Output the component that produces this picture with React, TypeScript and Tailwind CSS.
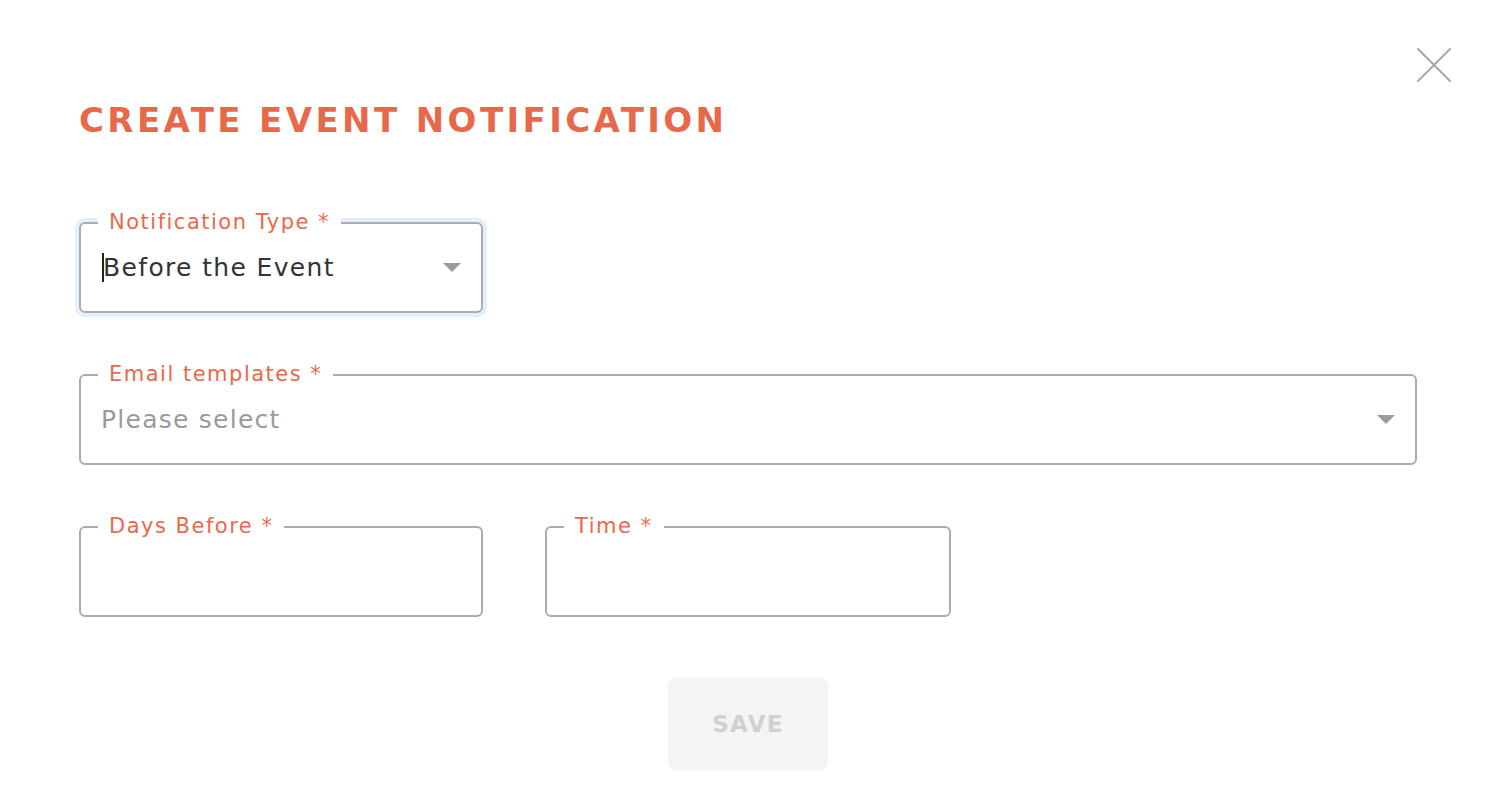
import React from "react";

const font = { fontFamily: '"DejaVu Sans", "Open Sans", sans-serif' };

function Arrow() {
  return (
    <svg width="18" height="9" viewBox="0 0 18 9" className="shrink-0">
      <path d="M0 0 L18 0 L9 9 Z" fill="#9b9b9b" />
    </svg>
  );
}

function Label({ children }: { children: React.ReactNode }) {
  return (
    <span className="absolute -top-[16px] left-[17px] bg-white px-[11px] text-[21px] leading-[28px] tracking-[1.5px] text-[#e8694a]">
      {children}
    </span>
  );
}

export default function App() {
  return (
    <div className="min-h-[794px] w-full bg-white font-['DejaVu_Sans',sans-serif]" style={font}>
      <div className="flex justify-end pt-[48px] pr-[43px]">
        <svg width="34" height="34" viewBox="0 0 34 34">
          <path d="M1 1 L33 33 M33 1 L1 33" stroke="#a5a8a4" strokeWidth="2" strokeLinecap="round" />
        </svg>
      </div>
      <div className="pl-[79px] pr-[77px]">
        <h1 className="mt-[16px] text-[34px] leading-[44px] font-bold tracking-[3.4px] text-[#e8694a]">
          CREATE EVENT NOTIFICATION
        </h1>
        <div className="mt-[80px] flex flex-col gap-[61px]">
          <div className="relative flex h-[91px] w-[404px] items-center justify-between rounded-[6px] border-2 border-[#a9adad] pl-[21px] pr-[20px] shadow-[0_0_0_4px_#e5eefb]">
            <Label>Notification Type *</Label>
            <div className="flex items-center">
              <span className="mr-[-1px] h-[29px] w-[2px] bg-[#222]" />
              <span className="text-[25px] tracking-[1.35px] text-[#333]">Before the Event</span>
            </div>
            <Arrow />
          </div>
          <div className="relative flex h-[91px] w-full items-center justify-between rounded-[6px] border-2 border-[#a9adad] pl-[20px] pr-[20px]">
            <Label>Email templates *</Label>
            <span className="text-[25px] tracking-[1.25px] text-[#9a9a9a]">Please select</span>
            <Arrow />
          </div>
          <div className="flex gap-[62px]">
            <div className="relative h-[91px] w-[404px] rounded-[6px] border-2 border-[#a9adad]">
              <Label>Days Before *</Label>
            </div>
            <div className="relative h-[91px] w-[406px] rounded-[6px] border-2 border-[#a9adad]">
              <Label>Time *</Label>
            </div>
          </div>
        </div>
        <div className="mt-[61px] flex justify-center">
          <button className="flex h-[92px] w-[160px] items-center justify-center rounded-[8px] bg-[#f4f4f3] text-[23px] font-bold tracking-[1.3px] text-[#d0d0d0]">
            SAVE
          </button>
        </div>
      </div>
    </div>
  );
}
